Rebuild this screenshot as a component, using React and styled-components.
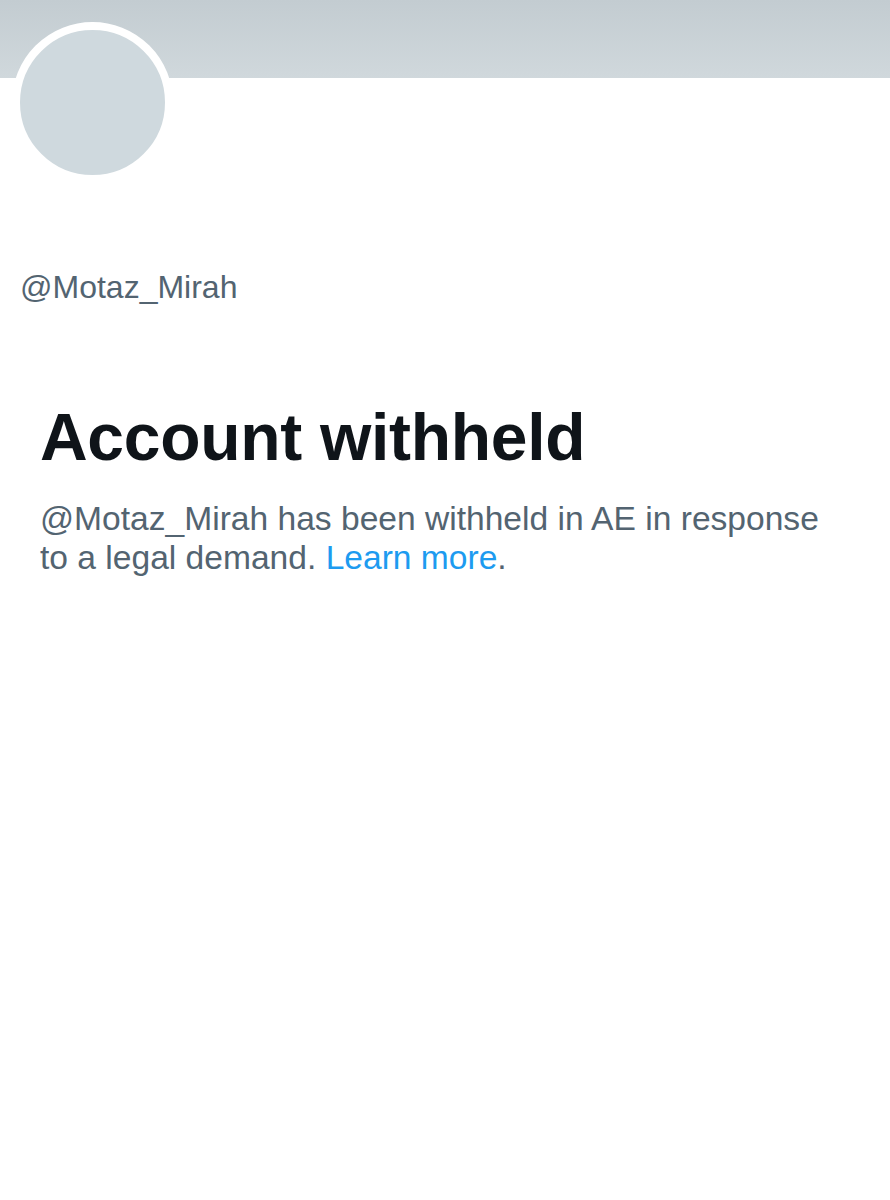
import React from 'react';
import styled, { createGlobalStyle } from 'styled-components';

const GlobalStyle = createGlobalStyle`
  body {
    margin: 0;
    background: #ffffff;
    font-family: "Liberation Sans", Arial, sans-serif;
  }
`;

const Page = styled.div`
  width: 890px;
  min-height: 1200px;
  background: #ffffff;
`;

const Banner = styled.div`
  height: 78px;
  background: linear-gradient(180deg, #c3ccd1 0%, #d0d8dc 100%);
`;

const Avatar = styled.div`
  width: 145px;
  height: 145px;
  margin: -56px 0 0 12px;
  border: 8px solid #ffffff;
  border-radius: 50%;
  background: #cfd9de;
  position: relative;
`;

const Handle = styled.div`
  margin: 84px 0 0 20px;
  font-size: 32px;
  line-height: 40px;
  color: #536471;
`;

const Notice = styled.section`
  margin-top: 92px;
  padding: 0 50px 0 40px;
`;

const Title = styled.h1`
  margin: 0;
  font-size: 66px;
  line-height: 76px;
  font-weight: 700;
  letter-spacing: -0.3px;
  color: #0f1419;
`;

const Body = styled.p`
  margin: 24px 0 0;
  font-size: 33.6px;
  line-height: 39px;
  color: #536471;
`;

const Link = styled.a`
  color: #1d9bf0;
  text-decoration: none;
`;

const App = () => (
  <Page>
    <GlobalStyle />
    <Banner />
    <Avatar />
    <Handle>@Motaz_Mirah</Handle>
    <Notice>
      <Title>Account withheld</Title>
      <Body>
        @Motaz_Mirah has been withheld in AE in response to a legal demand.{' '}
        <Link href="#">Learn more</Link>.
      </Body>
    </Notice>
  </Page>
);

export default App;
